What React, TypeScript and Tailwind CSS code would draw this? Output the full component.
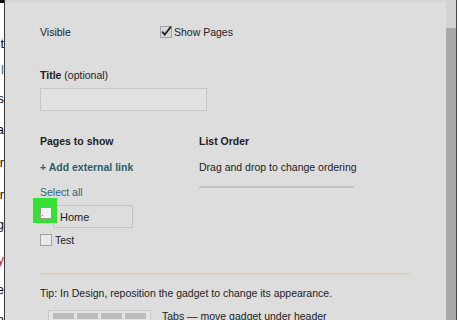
import React from "react";

const edgeWords = [
  { text: "t", mt: "mt-[33px]", color: "text-[#111]" },
  { text: "l", mt: "mt-[10px]", color: "text-[#1f6e80]" },
  { text: "s", mt: "mt-[13px]", color: "text-[#111]" },
  { text: "a", mt: "mt-[15px]", color: "text-[#111]" },
  { text: "r", mt: "mt-[17px]", color: "text-[#111]" },
  { text: "r", mt: "mt-[16px]", color: "text-[#111]" },
  { text: "g", mt: "mt-[14px]", color: "text-[#111]" },
  { text: "y", mt: "mt-[19px]", color: "text-[#d42020]" },
  { text: "e", mt: "mt-[14px]", color: "text-[#111]" },
  { text: "n", mt: "mt-[14px]", color: "text-[#111]" },
];

function Box({ checked = false }: { checked?: boolean }) {
  return (
    <svg width="12" height="12" viewBox="0 0 12 12" className="shrink-0 overflow-visible">
      <rect x="0.5" y="0.5" width="11" height="11" fill={checked ? "#d8d8d8" : "#e9e9e9"} stroke="#a3a3a3" />
      {checked && <path d="M2.2 5.6 L4.8 8.6 L11 0.4" fill="none" stroke="#1c1c1c" strokeWidth="1.7" />}
    </svg>
  );
}

export default function App() {
  return (
    <div className="flex h-[320px] w-[460px] overflow-hidden bg-white text-[10.5px] leading-[16px] text-[#222] [font-family:'Liberation_Sans',Arial,sans-serif]">
      {/* page behind the dialog, clipped at its right edge */}
      <div className="flex w-[4px] shrink-0 flex-col items-end overflow-hidden border-t-[3px] border-[#111] bg-white text-[13px]">
        {edgeWords.map((w, i) => (
          <div key={i} className={`${w.mt} h-[16px] whitespace-nowrap leading-[16px] ${w.color}`}>
            {w.text}
          </div>
        ))}
      </div>
      <div className="w-px shrink-0 bg-[#3a3a3a]" />

      {/* dialog */}
      <div className="min-w-0 flex-1 border-t-2 border-[#d5d5d5] bg-[#dddddd] pl-[35px] pt-[22px]">
        <div className="flex h-[16px] items-center">
          <span className="w-[120px]">Visible</span>
          <Box checked />
          <span className="ml-[2px]">Show Pages</span>
        </div>

        <div className="mt-[27px]">
          <span className="font-bold">Title</span> (optional)
        </div>
        <div className="mt-[5px] h-[23px] w-[167px] border border-[#c6c6c6] bg-[#e1e1e1]" />

        <div className="mt-[22px] flex">
          <div className="w-[159px]">
            <div className="font-bold">Pages to show</div>
            <div className="mt-[10px] font-bold text-[#2b5d68]">+ Add external link</div>
            <div className="mt-[9px] text-[#2f6470]">Select all</div>
            <div className="mt-[5px] flex items-start">
              <div className="order-2 ml-[1px] flex h-[23px] w-[80px] items-center border border-[#c4c4c4] bg-[#dddddd] pl-[6px] text-[11px]">
                Home
              </div>
              <div className="relative order-1 mt-[2px] flex">
                <div className="absolute left-[-7px] top-[-9px] h-[25px] w-[24px] bg-[#33e133]" />
                <svg width="12" height="12" viewBox="0 0 12 12" className="relative">
                  <rect x="0.5" y="0.5" width="11" height="11" fill="#f2f2f2" stroke="#9a9a9a" />
                  <rect x="2" y="8" width="1" height="1" fill="#777" />
                </svg>
              </div>
            </div>
            <div className="mt-[4px] flex h-[16px] items-center">
              <Box />
              <span className="ml-[3px]">Test</span>
            </div>
          </div>
          <div>
            <div className="font-bold">List Order</div>
            <div className="mt-[10px]">Drag and drop to change ordering</div>
            <div className="mt-[11px] h-[2px] w-[155px] bg-[#c4c4c4]" />
          </div>
        </div>

        <div className="mt-[25px] h-[2px] w-[370px] bg-[#d8d0c7]" />
        <div className="mt-[10px]">Tip: In Design, reposition the gadget to change its appearance.</div>

        <div className="mt-[9px] flex items-start">
          <div className="ml-[8px] flex h-[14px] w-[103px] gap-[3px] border border-[#c8c8c8] bg-[#e4e4e4] px-[4px] pt-[2px]">
            <div className="h-[6px] flex-1 bg-[#bdbdbd]" />
            <div className="h-[6px] flex-1 bg-[#bdbdbd]" />
            <div className="h-[6px] flex-1 bg-[#bdbdbd]" />
            <div className="h-[6px] flex-1 bg-[#bdbdbd]" />
          </div>
          <span className="ml-[11px] mt-[-2px]">Tabs — move gadget under header</span>
        </div>
      </div>

      {/* scrollbar */}
      <div className="flex w-[10px] shrink-0 flex-col">
        <div className="h-[28px] bg-[#d3d3d3]" />
        <div className="flex-1 bg-[#a9a9a9]" />
      </div>
      <div className="w-px shrink-0 bg-[#444]" />
      <div className="w-[3px] shrink-0 bg-white" />
    </div>
  );
}
